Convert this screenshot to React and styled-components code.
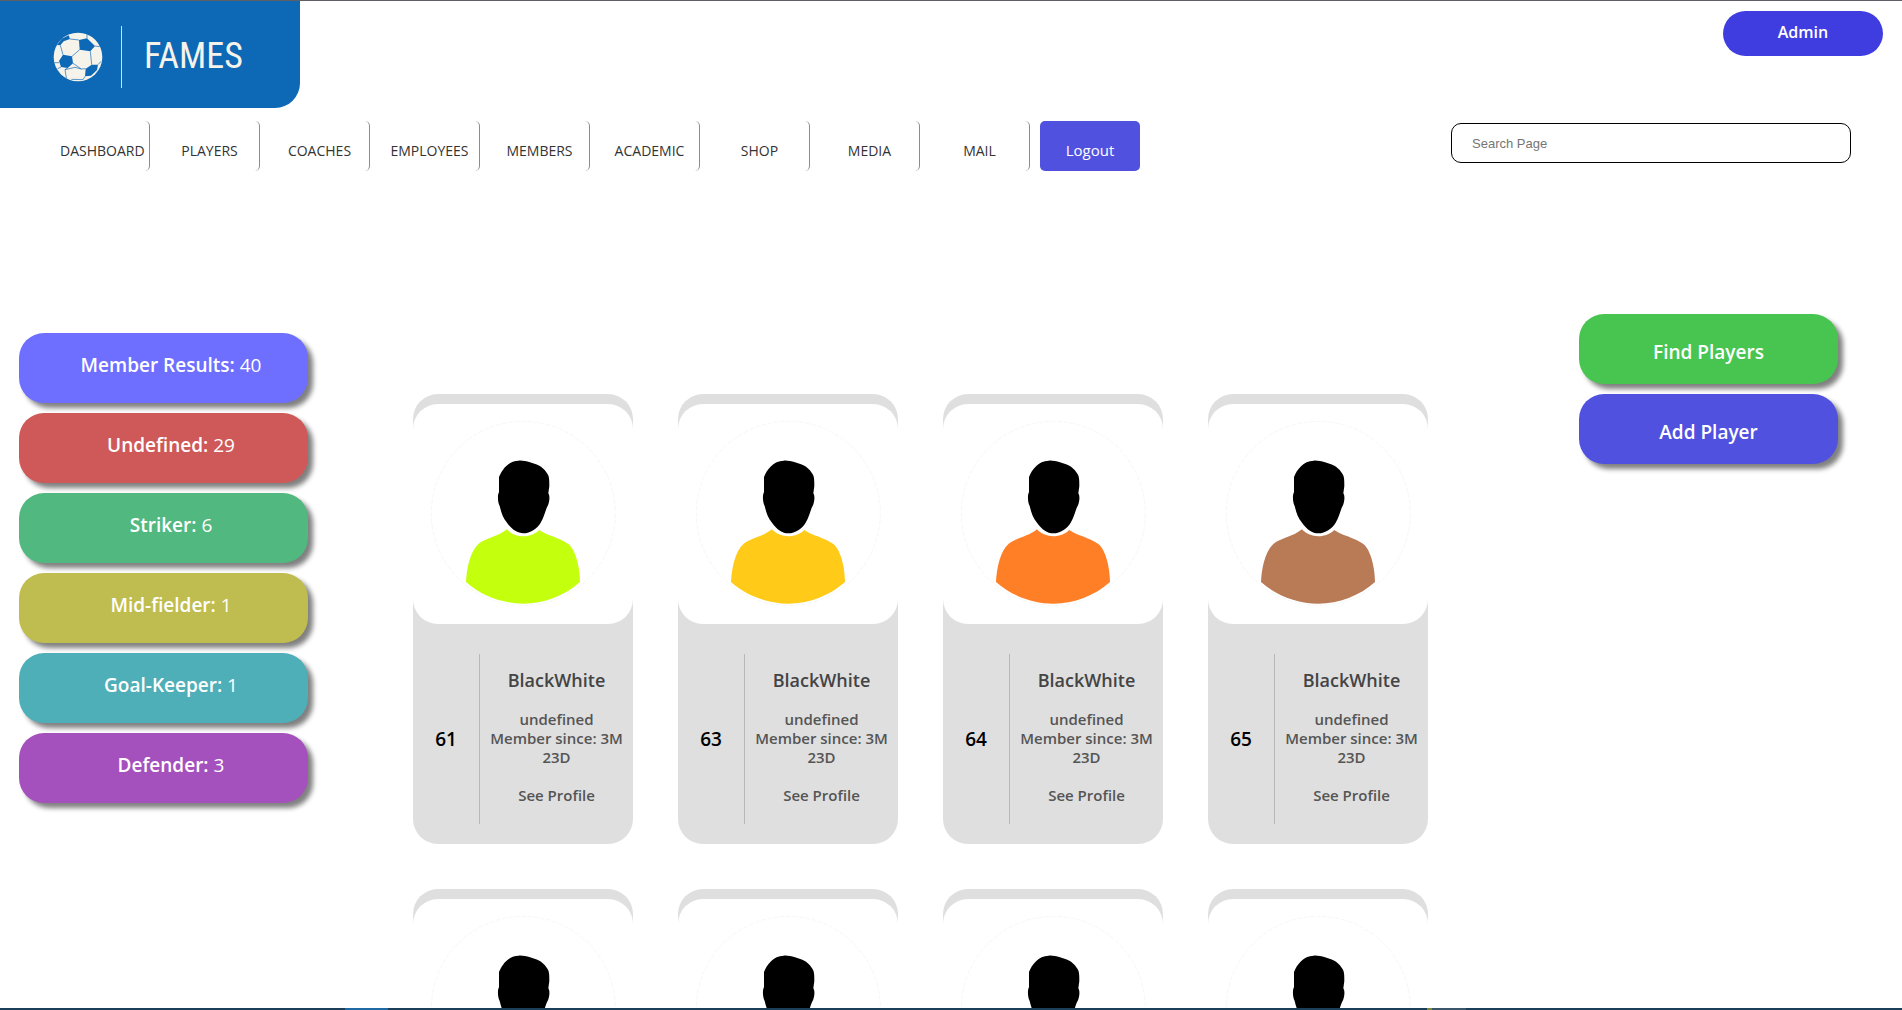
import React from 'react';
import styled, { createGlobalStyle } from 'styled-components';

const links = ['DASHBOARD', 'PLAYERS', 'COACHES', 'EMPLOYEES', 'MEMBERS', 'ACADEMIC', 'SHOP', 'MEDIA', 'MAIL'];

const results = [
    { label: 'Member Results:', count: 40, color: '#6e6eff' },
    { label: 'Undefined:', count: 29, color: '#cf5858' },
    { label: 'Striker:', count: 6, color: '#51b880' },
    { label: 'Mid-fielder:', count: 1, color: '#bfbd50' },
    { label: 'Goal-Keeper:', count: 1, color: '#4eafb8' },
    { label: 'Defender:', count: 3, color: '#a551bd' },
];

const players = [
    { key: 'a', id: 61, shirt: '#c4ff0e' },
    { key: 'b', id: 63, shirt: '#ffca18' },
    { key: 'c', id: 64, shirt: '#ff7f27' },
    { key: 'd', id: 65, shirt: '#b97a56' },
    { key: 'e', shirt: '#c4ff0e' },
    { key: 'f', shirt: '#ffca18' },
    { key: 'g', shirt: '#ff7f27' },
    { key: 'h', shirt: '#b97a56' },
];

const Ball = () => (
    <BallIcon viewBox="160 98 150 150" aria-hidden="true">
        <circle cx="235" cy="173" r="73" fill="#f6f3ea" />
        <g fill="#0d68b6">
            <path d="M238 122 L262 117 L286 140 L272 156 L240 151 Z" />
            <path d="M190 166 L217 171 L220 192 L204 206 L184 203 L178 185 Z" />
            <path d="M258 208 L276 196 L295 196 L292 212 L274 229 L256 231 Z" />
            <path d="M172 137 L186 118 L207 108 L211 119 L192 126 L182 138 Z" />
        </g>
        <g fill="none" stroke="#0d68b6" strokeWidth="2">
            <path d="M211 119 L238 122 M182 138 L190 166 M217 171 L240 151 M220 192 L245 209 L258 208 M272 156 L276 196 M286 140 L300 142 M262 117 L262 103 M204 206 L196 211 L200 236 M184 203 L174 208 M178 190 L164 190 M295 196 L304 186 M256 231 L250 241 L215 240 M196 211 L226 204 L245 209" />
        </g>
    </BallIcon>
);

const Avatar = ({ shirt }) => (
    <AvatarImage viewBox="39 72 660 660" aria-hidden="true">
        <circle cx="370" cy="400" r="276" fill="none" stroke="#f0f2f2" strokeWidth="2" strokeDasharray="14 5" />
        <path
            d="M356 242 C325 243 306 268 297 291 L297 337 C292 345 293 368 299 378 C304 398 308 412 321 428 C334 447 352 460 370 460 C391 460 411 446 422 428 C434 409 435 391 444 376 C449 362 450 348 445 340 L448 318 C448 299 448 287 440 278 C427 258 408 252 390 247 C378 244 367 241 356 242 Z"
            fill="#000"
        />
        <path
            d="M321 448 C331 460 351 469 370 469 C389 469 408 461 418 450 C442 467 477 472 505 492 C529 511 540 569 540 606 C495 647 431 671 370 671 C307 671 242 646 198 606 C200 566 210 514 236 491 C260 473 292 471 321 448 Z"
            fill={shirt}
        />
    </AvatarImage>
);

const PlayerCard = ({ player }) => (
    <Card>
        <Avatar shirt={player.shirt} />
        {player.id && (
            <CardBody>
                <Number>{player.id}</Number>
                <Details>
                    <Name>BlackWhite</Name>
                    <Info>
                        undefined
                        <br />
                        Member since: 3M 23D
                    </Info>
                    <ProfileLink href="#profile">See Profile</ProfileLink>
                </Details>
            </CardBody>
        )}
    </Card>
);

class App extends React.Component {
    render() {
        return (
            <Page>
                <GlobalStyle />
                <Header>
                    <Logo>
                        <Ball />
                        <LogoName>FAMES</LogoName>
                    </Logo>
                    <AdminButton type="button">Admin</AdminButton>
                </Header>
                <Toolbar>
                    <Nav>
                        {links.map((link) => (
                            <NavLink key={link} href={`#${link.toLowerCase()}`}>{link}</NavLink>
                        ))}
                        <Logout type="button">Logout</Logout>
                    </Nav>
                    <Search type="search" placeholder="Search Page" aria-label="Search Page" />
                </Toolbar>
                <Content>
                    <Results>
                        {results.map((result) => (
                            <Result key={result.label} $color={result.color}>
                                <strong>{result.label}</strong> {result.count}
                            </Result>
                        ))}
                    </Results>
                    <Players>
                        {players.map((player) => (
                            <PlayerCard key={player.key} player={player} />
                        ))}
                    </Players>
                    <Actions>
                        <Action type="button" $color="#48c551">Find Players</Action>
                        <Action type="button" $color="#5151e0">Add Player</Action>
                    </Actions>
                </Content>
                <BottomBar />
            </Page>
        );
    }
}

const GlobalStyle = createGlobalStyle`
    * {
        box-sizing: border-box;
    }
    body {
        margin: 0;
        background-color: #fff;
        font-family: "Trebuchet MS", "Open Sans", "Noto Sans", sans-serif;
    }
    button, input {
        font-family: inherit;
        border: none;
    }
    button {
        cursor: pointer;
    }
`
const Page = styled.div`
    height: 100vh;
    overflow: hidden;
    display: flex;
    flex-direction: column;
    border-top: 1px solid #5f5f66;
`
const Header = styled.header`
    display: flex;
    justify-content: space-between;
    align-items: flex-start;
    flex-shrink: 0;
`
const Logo = styled.div`
    display: flex;
    align-items: center;
    width: 300px;
    height: 107px;
    padding: 4px 0 0 53px;
    background-color: #0d68b6;
    border-bottom-right-radius: 25px;
`
const BallIcon = styled.svg`
    width: 50px;
    height: 50px;
    margin-right: 18px;
`
const LogoName = styled.span`
    height: 62px;
    padding-left: 22px;
    border-left: 1px solid #cfe0ee;
    color: #f6f3ea;
    font-family: "Roboto Condensed", "Arial Narrow", Roboto, sans-serif;
    font-size: 36px;
    line-height: 60px;
`
const AdminButton = styled.button`
    width: 160px;
    height: 45px;
    margin: 10px 19px 0 0;
    padding: 0 0 4px;
    border-radius: 25px;
    background-color: #3f3de0;
    color: #fff;
    font-size: 16px;
    font-weight: 600;
`
const Toolbar = styled.div`
    display: flex;
    justify-content: space-between;
    align-items: flex-start;
    flex-shrink: 0;
    margin-top: 13px;
    padding: 0 51px 0 50px;
`
const Nav = styled.nav`
    display: flex;
    gap: 10px;
`
const NavLink = styled.a`
    width: 100px;
    height: 50px;
    padding: 20px 10px 0;
    border-right: 1px solid #8c8c8c;
    border-radius: 5px;
    color: #333;
    font-size: 14px;
    line-height: 20px;
    text-align: center;
    text-decoration: none;
`
const Logout = styled.button`
    width: 100px;
    height: 50px;
    padding: 8px 0 0;
    border-radius: 5px;
    background-color: #5151e0;
    color: #fff;
    font-size: 15px;
`
const Search = styled.input`
    width: 400px;
    height: 40px;
    margin-top: 2px;
    padding: 0 20px;
    border: 1px solid #000;
    border-radius: 10px;
    font-family: "Liberation Sans", Arial, sans-serif;
    font-size: 13px;

    &::placeholder {
        color: #757575;
    }
`
const Content = styled.main`
    display: flex;
    align-items: flex-start;
    flex: 1;
    min-height: 0;
    overflow: hidden;
    padding: 143px 64px 0 19px;
`
const Results = styled.section`
    display: flex;
    flex-direction: column;
    gap: 10px;
    width: 289px;
    margin-top: 19px;
`
const Result = styled.div`
    height: 70px;
    padding: 20px 0 0 15px;
    border-radius: 25px;
    background-color: ${(props) => props.$color};
    box-shadow: 5px 5px 5px #808080;
    color: #fff;
    font-size: 19px;
    line-height: 24px;
    text-align: center;

    strong {
        font-weight: 600;
    }
`
const Players = styled.section`
    display: grid;
    grid-template-columns: repeat(4, 220px);
    gap: 45px;
    margin: 80px auto 0 105px;
`
const Card = styled.article`
    height: 450px;
    padding-top: 10px;
    border-radius: 25px;
    background-color: #dfdfdf;
`
const AvatarImage = styled.svg`
    display: block;
    width: 100%;
    height: 220px;
    border-radius: 25px;
    background-color: #fff;
`
const CardBody = styled.div`
    display: grid;
    grid-template-columns: 66px 1fr;
    height: 170px;
    margin-top: 30px;
`
const Number = styled.span`
    align-self: center;
    font-size: 19px;
    font-weight: 600;
    text-align: center;
`
const Details = styled.div`
    padding-top: 14px;
    border-left: 1px solid #b8b8b8;
    color: #555;
    font-size: 15px;
    font-weight: 600;
    line-height: 19px;
    text-align: center;
`
const Name = styled.h3`
    margin: 0;
    color: #444;
    font-size: 18px;
    font-weight: 600;
    line-height: 24px;
`
const Info = styled.p`
    margin: 18px 0 19px;
`
const ProfileLink = styled.a`
    color: inherit;
    text-decoration: none;
`
const Actions = styled.section`
    display: flex;
    flex-direction: column;
    gap: 10px;
    width: 259px;
`
const Action = styled.button`
    height: 70px;
    padding: 6px 0 0;
    border-radius: 25px;
    background-color: ${(props) => props.$color};
    box-shadow: 5px 5px 5px #808080;
    color: #fff;
    font-size: 19px;
    font-weight: 600;
`
const BottomBar = styled.footer`
    flex-shrink: 0;
    height: 2px;
    background: linear-gradient(
        to right,
        #1b3f59 345px,
        #1f6aa5 345px 388px,
        #1b3f59 388px 1427px,
        #7d8a3a 1427px 1432px,
        #3a566b 1432px 1466px,
        #1b3f59 1466px
    );
`

export default App;
